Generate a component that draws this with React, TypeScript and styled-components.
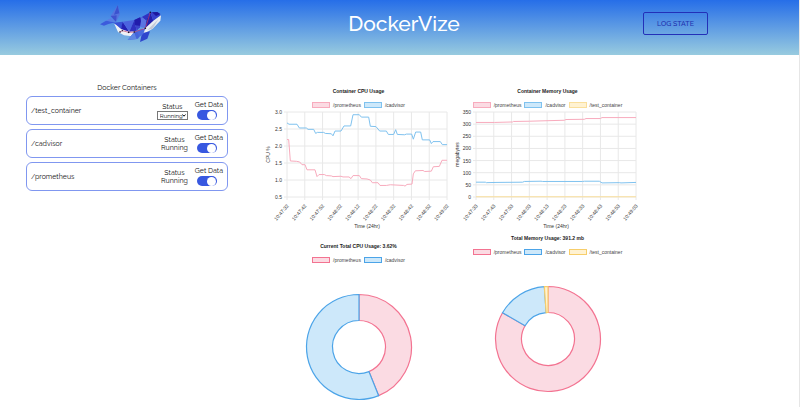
import React from "react";
import styled, { createGlobalStyle } from "styled-components";

const GlobalStyle = createGlobalStyle`
  * { box-sizing: border-box; }
  body {
    margin: 0;
    background: #fff;
    color: #111;
    font-family: Raleway, Lato, sans-serif;
  }
`;

const Page = styled.div`
  min-height: 100vh;
  border-right: 1px solid #e6e6e6;
`;

const Header = styled.header`
  display: flex;
  align-items: center;
  justify-content: space-between;
  height: 55px;
  padding: 0 91px 8px 100px;
  background: linear-gradient(#266ee8, #98cbdf);
`;

const Logo = styled.svg`
  display: block;
  width: 65px;
  height: 47px;
`;

const Brand = styled.h1`
  margin: 0;
  color: #fff;
  font-size: 21px;
  line-height: 28px;
  font-weight: 500;
`;

const LogButton = styled.button`
  width: 65px;
  height: 23px;
  padding: 0;
  border: 1px solid #2330b8;
  border-radius: 2px;
  background: transparent;
  color: #2030ae;
  font-family: inherit;
  font-size: 7px;
  font-weight: 500;
`;

const Main = styled.main`
  display: flex;
  align-items: flex-start;
  gap: 36px;
  padding: 29px 26px 4px;
`;

const Sidebar = styled.section`
  flex: 0 0 202px;
  display: flex;
  flex-direction: column;
  gap: 4px;
`;

const SidebarTitle = styled.h2`
  margin: 0;
  font-size: 7px;
  line-height: 8px;
  font-weight: 400;
  text-align: center;
`;

const Card = styled.article`
  display: flex;
  align-items: center;
  height: 29px;
  padding: 0 4px;
  border: 1px solid #8097f0;
  border-radius: 6px;
  font-size: 7px;
  line-height: 8px;
`;

const CardName = styled.span`
  flex: 1;
`;

const Status = styled.div`
  display: flex;
  flex-direction: column;
  align-items: center;
  margin: 1px 7px 0 0;
`;

const SelectBox = styled.div`
  position: relative;
  width: 31px;
  height: 9px;
`;

const StatusSelect = styled.select`
  appearance: none;
  display: block;
  width: 100%;
  height: 100%;
  padding: 0 0 0 2px;
  border: 1px solid #777;
  border-radius: 0;
  background: #fff;
  color: #111;
  font-family: inherit;
  font-size: 6px;
  line-height: 7px;
`;

const Chevron = styled.svg`
  position: absolute;
  top: 3px;
  right: 2px;
  width: 4px;
  height: 3px;
  pointer-events: none;
`;

const Toggle = styled.label`
  display: flex;
  flex-direction: column;
  align-items: center;
  gap: 1px;
`;

const Switch = styled.input`
  appearance: none;
  display: flex;
  align-items: center;
  justify-content: flex-end;
  width: 20px;
  height: 10px;
  margin: 0 3px 0 0;
  padding: 0 1px;
  border-radius: 5px;
  background: #3858e0;

  &::before {
    content: "";
    width: 9px;
    height: 9px;
    border-radius: 50%;
    background: #fff;
  }

  &:not(:checked) {
    justify-content: flex-start;
    background: #bbb;
  }
`;

const Charts = styled.section`
  display: flex;
  align-items: flex-start;
  font-family: "Liberation Sans", Arial, sans-serif;
  color: #444;
`;

const ChartColumn = styled.div`
  width: 189px;
`;

const Panel = styled.figure`
  margin: 0;
`;

const ChartTitle = styled.figcaption`
  font-size: 5px;
  line-height: 14px;
  font-weight: 700;
  text-align: center;
  color: #222;
`;

const Legend = styled.div<{ $height: number }>`
  display: flex;
  align-items: center;
  justify-content: center;
  gap: 3px;
  height: ${(p) => p.$height}px;
  font-size: 5px;
  line-height: 8px;
`;

const LegendItem = styled.span`
  display: flex;
  align-items: center;
  gap: 3px;
`;

const Swatch = styled.span<{ $fill: string; $line: string }>`
  width: 18px;
  height: 6px;
  border: 1px solid ${(p) => p.$line};
  background: ${(p) => p.$fill};
`;

const Plot = styled.svg`
  display: block;
  width: 189px;
  overflow: visible;
  fill: #333;
  font-size: 5px;
`;

const Ring = styled.svg`
  display: block;
  width: 110px;
  height: 110px;
  margin: 25px auto 0;
`;

type Tone = { fill: string; line: string; soft: string };
const pink: Tone = { fill: "#fbdbe3", line: "#f37391", soft: "#f8abbd" };
const blue: Tone = { fill: "#cde8fa", line: "#4ca4e8", soft: "#7fc2ef" };
const gold: Tone = { fill: "#fff2d2", line: "#f7ce6b", soft: "#fadf9c" };

type Point = [number, number];
type Series = { name: string; tone: Tone; points: Point[] };

const SPAN = 480;

const cpuSeries: Series[] = [
  {
    name: "/prometheus",
    tone: pink,
    points: [
      [0, 2.19], [5, 2.19], [10, 1.56], [28, 1.55], [38, 1.53], [45, 1.45], [54, 1.45], [60, 1.3], [84, 1.3],
      [90, 1.1], [96, 1.16], [112, 1.16], [118, 1.13], [133, 1.12], [138, 1.1], [162, 1.11], [168, 1.09],
      [186, 1.09], [192, 1.04], [198, 1.13], [217, 1.13], [223, 1.04], [240, 1.03], [250, 1], [256, 0.92],
      [273, 0.92], [279, 0.84], [298, 0.84], [310, 0.86], [350, 0.84], [354, 0.82], [360, 0.87], [375, 0.88],
      [379, 1.18], [385, 1.27], [408, 1.28], [413, 1.25], [433, 1.26], [439, 1.39], [457, 1.4], [465, 1.58],
      [480, 1.58],
    ],
  },
  {
    name: "/cadvisor",
    tone: blue,
    points: [
      [0, 2.68], [6, 2.64], [30, 2.64], [37, 2.53], [58, 2.53], [63, 2.49], [80, 2.49], [86, 2.37], [91, 2.4],
      [110, 2.4], [115, 2.37], [133, 2.36], [138, 2.3], [144, 2.44], [162, 2.44], [171, 2.59], [191, 2.59],
      [198, 2.92], [217, 2.92], [223, 2.85], [245, 2.85], [250, 2.58], [267, 2.57], [278, 2.44], [298, 2.44],
      [304, 2.34], [320, 2.34], [326, 2.48], [331, 2.34], [353, 2.33], [358, 2.35], [374, 2.35], [379, 2.2],
      [386, 2.41], [401, 2.41], [406, 2.18], [428, 2.18], [433, 2.07], [438, 2.13], [460, 2.13], [466, 2.04],
      [480, 2.04],
    ],
  },
];

const memorySeries: Series[] = [
  {
    name: "/prometheus",
    tone: pink,
    points: [
      [0, 307], [55, 307], [110, 309], [112, 311], [160, 312], [210, 314], [265, 316], [270, 319], [325, 320],
      [330, 323], [373, 323], [378, 327], [480, 327],
    ],
  },
  {
    name: "/cadvisor",
    tone: blue,
    points: [
      [0, 61], [28, 61], [31, 59], [60, 60], [140, 61], [145, 64], [195, 65], [200, 64], [320, 64], [325, 65],
      [370, 65], [378, 58], [430, 59], [435, 58], [480, 60],
    ],
  },
  { name: "/test_container", tone: gold, points: [[0, 1], [480, 1]] },
];

const clock = ["47:3", "47:4", "47:5", "48:0", "48:1", "48:2", "48:3", "48:4", "48:5", "49:0"];

const LEFT = 23;
const RIGHT = 183;
const TOP = 1;
const BOTTOM = 86;

type LineChartProps = {
  label: string;
  height: number;
  unit: string;
  ticks: string[];
  second: string;
  series: Series[];
};

function LineChart({ label, height, unit, ticks, second, series }: LineChartProps) {
  const max = Number(ticks[0]);
  const min = Number(ticks[ticks.length - 1]);
  const px = (t: number) => LEFT + (t / SPAN) * (RIGHT - LEFT);
  const py = (v: number) => TOP + ((max - v) / (max - min)) * (BOTTOM - TOP);
  const middle = (TOP + BOTTOM) / 2;
  return (
    <Plot role="img" aria-label={label} height={height} viewBox={`0 0 189 ${height}`}>
      {ticks.map((tick) => (
        <g key={tick}>
          <line x1={LEFT - 3} x2={RIGHT} y1={py(Number(tick))} y2={py(Number(tick))} stroke="#e8e8e8" />
          <text x={LEFT - 5} y={py(Number(tick)) + 2} textAnchor="end">{tick}</text>
        </g>
      ))}
      {clock.map((time, i) => {
        const x = px((SPAN * i) / (clock.length - 1));
        return (
          <g key={time}>
            <line x1={x} x2={x} y1={TOP} y2={BOTTOM + 3} stroke="#e8e8e8" />
            <text transform={`translate(${x + 2} ${BOTTOM + 9}) rotate(-50)`} textAnchor="end">
              {`10:${time}${second}`}
            </text>
          </g>
        );
      })}
      {series.map((s) => (
        <polyline
          key={s.name}
          points={s.points.map(([t, v]) => `${px(t)},${py(v)}`).join(" ")}
          fill="none"
          stroke={s.tone.soft}
          strokeLinejoin="round"
        />
      ))}
      <text x={(LEFT + RIGHT) / 2} y={117} textAnchor="middle">Time (24hr)</text>
      <text transform={`translate(6 ${middle}) rotate(-90)`} textAnchor="middle">{unit}</text>
    </Plot>
  );
}

type Slice = { tone: Tone; from: number; to: number };

function ringPath(from: number, to: number) {
  const at = (deg: number, r: number) => {
    const a = (deg * Math.PI) / 180;
    return `${55 + r * Math.sin(a)} ${55 - r * Math.cos(a)}`;
  };
  const large = to - from > 180 ? 1 : 0;
  return `M${at(from, 52.5)} A52.5 52.5 0 ${large} 1 ${at(to, 52.5)} L${at(to, 26.5)} A26.5 26.5 0 ${large} 0 ${at(from, 26.5)} Z`;
}

function Doughnut({ label, slices }: { label: string; slices: Slice[] }) {
  return (
    <Ring role="img" aria-label={label} viewBox="0 0 110 110">
      {slices.map((s) => (
        <path key={s.from} d={ringPath(s.from, s.to)} fill={s.tone.fill} stroke={s.tone.line} strokeWidth="1.2" />
      ))}
    </Ring>
  );
}

function ChartLegend({ series, soft, height }: { series: Series[]; soft?: boolean; height: number }) {
  return (
    <Legend $height={height}>
      {series.map((s) => (
        <LegendItem key={s.name}>
          <Swatch $fill={s.tone.fill} $line={soft ? s.tone.soft : s.tone.line} />
          {s.name}
        </LegendItem>
      ))}
    </Legend>
  );
}

function Whale() {
  return (
    <Logo viewBox="30 0 195 141" role="img" aria-label="Whale">
      <path fill="#5574df" d="M83 15 62 48 78 66 90 42Z" />
      <path fill="#3b52cf" d="M83 15 72 44 88 40Z" />
      <path fill="#3f52cf" d="M62 48 78 66 80 46Z" />
      <path fill="#3c5bdc" d="M30 73 48 62 76 67 55 72 42 77Z" />
      <path fill="#5a7de5" d="M48 62 62 54 78 66Z" />
      <path fill="#eef2f6" d="M72 70 98 84 134 96 126 109 102 106 84 96Z" />
      <path fill="#e9edf2" d="M213 46 211 62 188 86 160 102 150 94 180 68Z" />
      <path fill="#c3cad8" d="M205 58 188 86 172 90Z" />
      <path fill="#3951d6" d="M70 68 98 65 94 88 80 76Z" />
      <path fill="#2421b4" d="M98 65 118 95 93 87Z" />
      <path fill="#4b63df" d="M98 65 133 60 118 95Z" />
      <path fill="#2f2fc1" d="M133 60 118 95 140 92Z" />
      <path fill="#3b43cb" d="M133 60 155 51 150 82 140 92Z" />
      <path fill="#211bab" d="M133 60 150 52 156 78 135 76Z" />
      <path fill="#2f33c3" d="M155 51 181 37 168 62Z" />
      <path fill="#5b74e2" d="M155 51 170 62 166 85 150 80Z" />
      <path fill="#241fac" d="M181 37 190 62 166 84 170 58Z" />
      <path fill="#3640cc" d="M181 37 202 36 212 45 190 62Z" />
      <path fill="#1d179d" d="M186 37 202 36 211 42 198 48Z" />
      <path fill="#4464da" d="M132 97 166 85 144 116 113 120Z" />
      <path fill="#5e87e4" d="M132 97 140 118 113 120Z" />
      <path fill="#2f45cd" d="M156 100 180 94 172 116 150 126Z" />
      <path fill="#496adf" d="M140 92 166 85 160 102 148 110Z" />
      <path fill="none" stroke="#c8406a" strokeWidth="2" d="M90 96 97 92 116 97 133 96 166 85 181 37" />
      <g fill="#14142c">
        <circle cx="90" cy="96" r="2.5" />
        <circle cx="97" cy="92" r="2" />
        <circle cx="116" cy="97" r="2.5" />
        <circle cx="133" cy="96" r="2.5" />
        <circle cx="166" cy="85" r="2.5" />
        <circle cx="181" cy="37" r="2.5" />
      </g>
    </Logo>
  );
}

function ContainerCard({ name, selectable }: { name: string; selectable?: boolean }) {
  return (
    <Card>
      <CardName>{name}</CardName>
      <Status>
        {selectable ? (
          <>
            <label htmlFor="status">Status</label>
            <SelectBox>
              <StatusSelect id="status" defaultValue="Running">
                <option>Running</option>
                <option>Stopped</option>
              </StatusSelect>
              <Chevron viewBox="0 0 4 3" aria-hidden="true">
                <path d="M0.5 0.5 2 2.2 3.5 0.5" fill="none" stroke="#111" />
              </Chevron>
            </SelectBox>
          </>
        ) : (
          <>
            <span>Status</span>
            <span>Running</span>
          </>
        )}
      </Status>
      <Toggle>
        Get Data
        <Switch type="checkbox" role="switch" defaultChecked />
      </Toggle>
    </Card>
  );
}

export default function App() {
  return (
    <>
      <GlobalStyle />
      <Page>
        <Header>
          <Whale />
          <Brand>DockerVize</Brand>
          <LogButton type="button">LOG STATE</LogButton>
        </Header>
        <Main>
          <Sidebar>
            <SidebarTitle>Docker Containers</SidebarTitle>
            <ContainerCard name="/test_container" selectable />
            <ContainerCard name="/cadvisor" />
            <ContainerCard name="/prometheus" />
          </Sidebar>
          <Charts>
            <ChartColumn>
              <Panel>
                <ChartTitle>Container CPU Usage</ChartTitle>
                <ChartLegend series={cpuSeries} soft height={13} />
                <LineChart
                  label="Container CPU usage"
                  height={128}
                  unit="CPU %"
                  ticks={["3.0", "2.5", "2.0", "1.5", "1.0", "0.5"]}
                  second="2"
                  series={cpuSeries}
                />
              </Panel>
              <Panel>
                <ChartTitle>Current Total CPU Usage: 3.62%</ChartTitle>
                <ChartLegend series={cpuSeries} height={14} />
                <Doughnut
                  label="Share of CPU by container"
                  slices={[
                    { tone: pink, from: 0, to: 158 },
                    { tone: blue, from: 158, to: 360 },
                  ]}
                />
              </Panel>
            </ChartColumn>
            <ChartColumn>
              <Panel>
                <ChartTitle>Container Memory Usage</ChartTitle>
                <ChartLegend series={memorySeries} soft height={13} />
                <LineChart
                  label="Container memory usage"
                  height={120}
                  unit="megabytes"
                  ticks={["350", "300", "250", "200", "150", "100", "50", "0"]}
                  second="3"
                  series={memorySeries}
                />
              </Panel>
              <Panel>
                <ChartTitle>Total Memory Usage: 391.2 mb</ChartTitle>
                <ChartLegend series={memorySeries} height={14} />
                <Doughnut
                  label="Share of memory by container"
                  slices={[
                    { tone: pink, from: 0, to: 300 },
                    { tone: blue, from: 300, to: 356 },
                    { tone: gold, from: 356, to: 360 },
                  ]}
                />
              </Panel>
            </ChartColumn>
          </Charts>
        </Main>
      </Page>
    </>
  );
}
